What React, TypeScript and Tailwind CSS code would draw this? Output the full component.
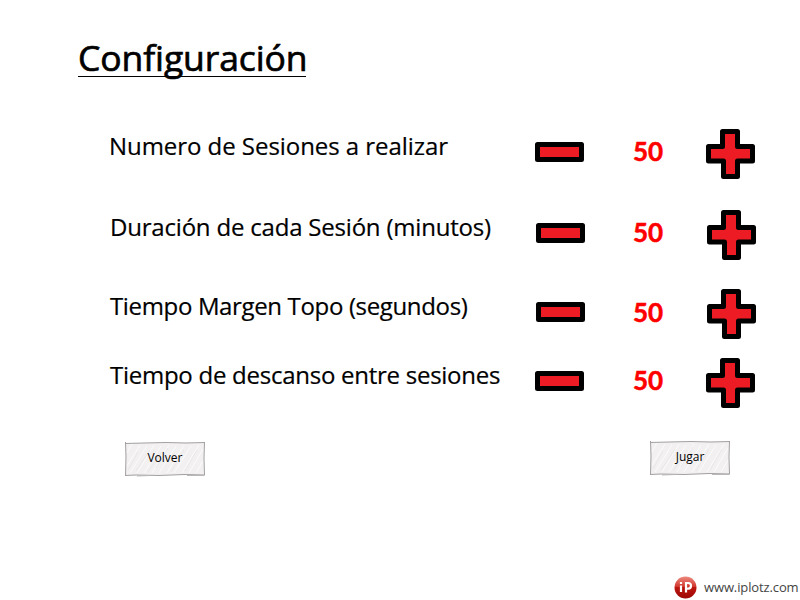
const rows = [
  { label: 'Numero de Sesiones a realizar', row: 'mt-[43px] pl-[109px]', text: 'w-[426px] tracking-[-0.05px]', num: 'pt-[6px] pl-[49px] w-[122px]' },
  { label: 'Duración de cada Sesión (minutos)', row: 'mt-[31px] pl-[110px]', text: 'w-[426px] tracking-[-0.2px]', num: 'pt-[6px] pl-[48px] w-[122px]' },
  { label: 'Tiempo Margen Topo (segundos)', row: 'mt-[29px] pl-[110px]', text: 'w-[426px] tracking-[-0.35px]', num: 'pt-[7px] pl-[48px] w-[122px]' },
  { label: 'Tiempo de descanso entre sesiones', row: 'mt-[19px] pl-[110px]', text: 'w-[425px] tracking-[-0.26px]', num: 'pt-[6px] pl-[49px] w-[122px]' },
];

function Minus() {
  return (
    <svg className="mt-[13px] block shrink-0" width="49" height="20" viewBox="0 0 49 20">
      <rect x="2.5" y="2.5" width="44" height="15" fill="#ed1c24" stroke="#000" strokeWidth="5" strokeLinejoin="round" />
    </svg>
  );
}

function Plus() {
  return (
    <svg className="block shrink-0" width="49" height="50" viewBox="0 0 49 50">
      <path d="M16.5 2.5H31.5V17.5H46.5V32H31.5V47.5H17.5V32H2.5V17.5H16.5Z" fill="#ed1c24" stroke="#000" strokeWidth="5" strokeLinejoin="round" />
    </svg>
  );
}

function SketchButton({ label }: { label: string }) {
  return (
    <button className="relative flex h-[36px] w-[82px] items-center justify-center text-[12px] leading-none text-black">
      <svg className="absolute inset-0" width="82" height="36" viewBox="0 0 82 36" fill="none">
        <path d="M1.5 2L80 1.5V34L1.5 34.5Z" fill="#f2f0f0" />
        <path d="M3 12L8 3M3 25L16 4M6 32L23 5M13 32L30 4M20 32L37 5M28 32L45 4M35 32L52 5M43 32L60 4M50 32L67 5M58 32L75 4M65 32L79 8M72 32L79 20" stroke="#fff" strokeWidth="1" opacity=".75" />
        <path d="M4 29L14 11M12 30L26 9M24 31L38 10M32 27L44 7M47 31L60 9M61 30L73 9" stroke="#eae7e8" strokeWidth="1" />
        <path d="M1 2.5L20 2L42 1.5L62 2L81 1.5M80.5 1L80 17L80.5 34M81 34L60 33.5L35 34.5L12 34L1 34.5M1.5 1L2 16L1.5 35" stroke="#a3a1a1" strokeWidth="1" />
        <path d="M13 35L26 34.5M63 34.5L80 34.5" stroke="#b9b7b7" strokeWidth="1" />
      </svg>
      <span className="relative -mt-[2px]">{label}</span>
    </button>
  );
}

export default function App() {
  return (
    <main className="flex h-[600px] w-[800px] flex-col overflow-hidden bg-white font-['Comic_Sans_MS','Open_Sans',sans-serif] text-black">
      <h1 className="ml-[78px] mt-[39px] h-[38px] w-[228px] whitespace-nowrap border-b border-black text-[35.5px] leading-[37px] tracking-[-0.1px] [-webkit-text-stroke:0.7px_black]">Configuración</h1>
      <div className="mt-[9px] flex flex-col">
        {rows.map((r) => (
          <div key={r.label} className={`flex h-[50px] items-start ${r.row}`}>
            <span className={`shrink-0 whitespace-nowrap text-[24px] leading-[34px] [-webkit-text-stroke:0.2px_black] ${r.text}`}>{r.label}</span>
            <Minus />
            <span className={`shrink-0 font-['Comic_Sans_MS',Lato,sans-serif] text-[26px] font-bold leading-[32px] text-[#ff0000] [-webkit-text-stroke:0.5px_#ff0000] ${r.num}`}>50</span>
            <Plus />
          </div>
        ))}
      </div>
      <div className="mt-[32px] flex items-start pl-[124px]">
        <div className="pt-px"><SketchButton label="Volver" /></div>
        <div className="ml-[443px]"><SketchButton label="Jugar" /></div>
      </div>
      <footer className="mt-auto flex h-[25px] items-center pl-[674px] font-['Open_Sans',sans-serif]">
        <svg className="shrink-0" width="23" height="23" viewBox="0 0 23 23">
          <defs>
            <linearGradient id="ball" x1="0" y1="0" x2="0" y2="1">
              <stop offset="0" stopColor="#ed8a80" />
              <stop offset=".45" stopColor="#d23a30" />
              <stop offset=".5" stopColor="#bd150f" />
              <stop offset="1" stopColor="#9c0906" />
            </linearGradient>
          </defs>
          <circle cx="11.5" cy="11.5" r="11" fill="url(#ball)" />
          <path d="M7 9.5V16M12 16.5V7H14.2a2.7 2.7 0 0 1 0 5.6H12" fill="none" stroke="#fff" strokeWidth="2.2" />
          <rect x="5.9" y="6" width="2.2" height="2" fill="#fff" />
        </svg>
        <span className="ml-[7px] whitespace-nowrap text-[13px] leading-none tracking-[-0.12px] text-[#444]">www.iplotz.com</span>
      </footer>
    </main>
  );
}
